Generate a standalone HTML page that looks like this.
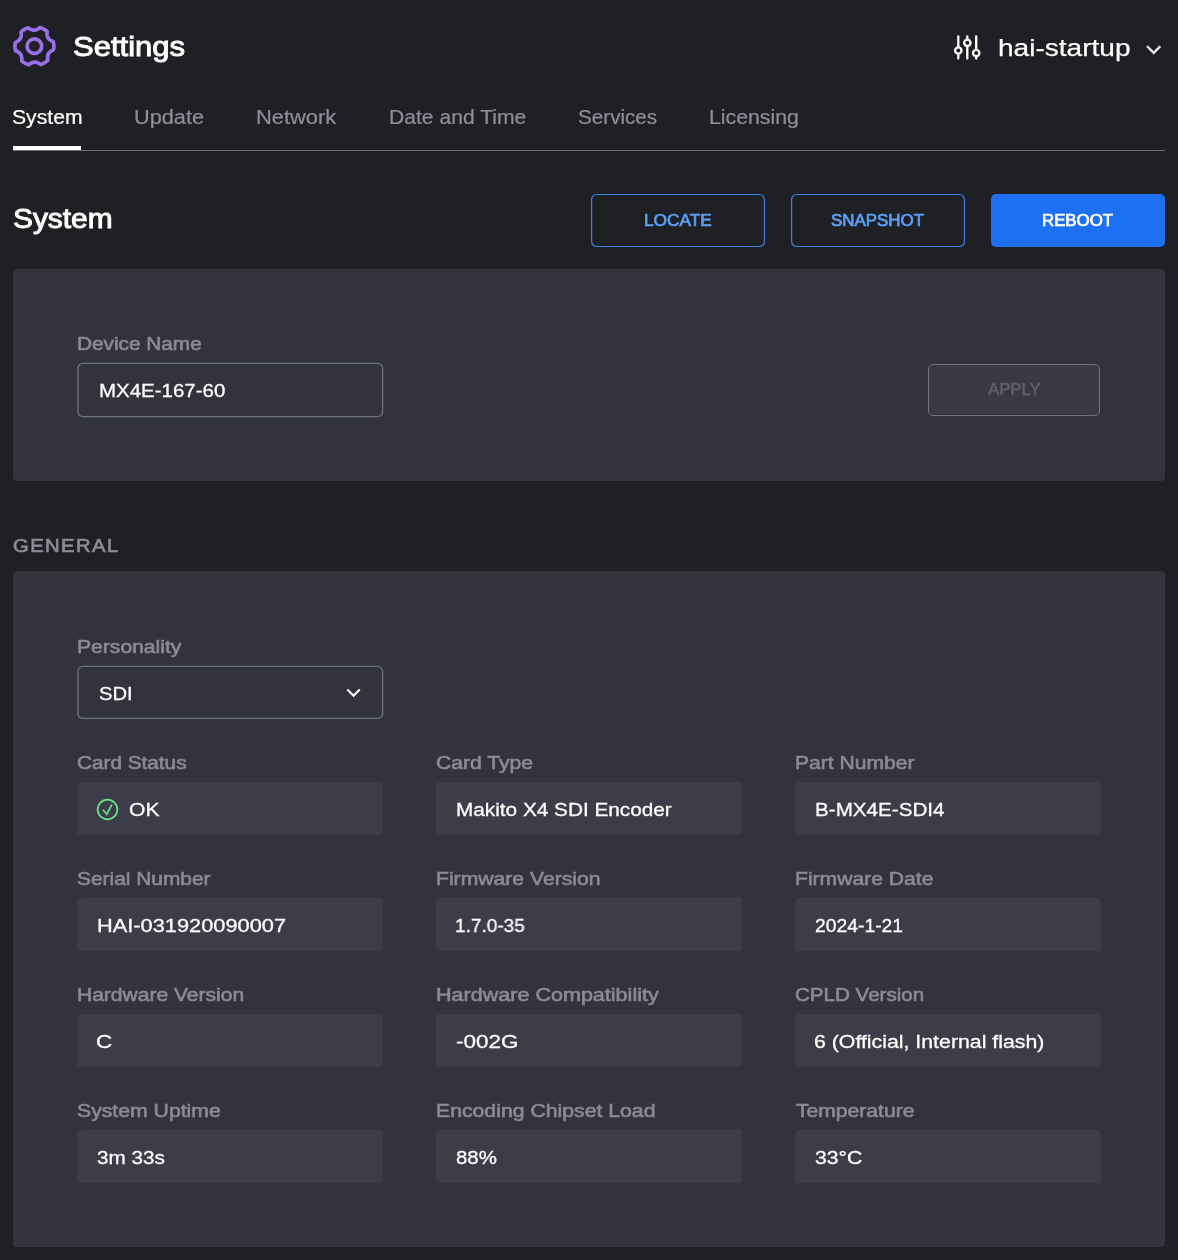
<!DOCTYPE html>
<html lang="en"><head><meta charset="utf-8"><title>Settings</title>
<style>
html,body{margin:0;padding:0;}
body{width:1178px;height:1260px;background:#1f2023;position:relative;overflow:hidden;font-family:"Liberation Sans",sans-serif;}
h1,h2,label{margin:0;font-weight:400;}
.b{position:absolute;box-sizing:border-box;}
.t{position:absolute;white-space:nowrap;transform-origin:0 0;display:block;will-change:transform;}
</style></head><body>
<header>
<svg class="b" style="left:10px;top:22px" width="50" height="50" viewBox="-24.4 -24.15 50 50" fill="none" stroke="#9a70ea" stroke-width="3.7" stroke-linejoin="round">
<path d="M19.45 0.00 L19.44 0.51 L19.42 1.02 L19.39 1.53 L19.34 2.03 L19.28 2.54 L19.21 3.04 L19.12 3.54 L18.49 3.93 L17.81 4.27 L17.24 4.62 L16.73 4.96 L16.28 5.29 L15.86 5.62 L15.47 5.94 L15.13 6.27 L14.81 6.60 L14.53 6.93 L14.28 7.28 L14.06 7.63 L13.87 8.01 L13.71 8.40 L13.57 8.81 L13.46 9.25 L13.36 9.71 L13.29 10.20 L13.24 10.72 L13.20 11.27 L13.18 11.87 L13.19 12.51 L13.24 13.24 L13.39 14.11 L13.01 14.45 L12.63 14.79 L12.24 15.12 L11.84 15.43 L11.43 15.74 L11.02 16.03 L10.59 16.31 L10.16 16.58 L9.73 16.84 L9.28 17.09 L8.83 17.33 L8.37 17.56 L7.91 17.77 L7.44 17.97 L6.97 18.16 L6.49 18.33 L5.84 17.98 L5.20 17.56 L4.62 17.24 L4.07 16.97 L3.56 16.74 L3.07 16.54 L2.59 16.37 L2.14 16.23 L1.69 16.13 L1.26 16.05 L0.84 16.01 L0.42 15.99 L0.00 16.02 L-0.42 16.07 L-0.85 16.16 L-1.28 16.28 L-1.73 16.43 L-2.19 16.61 L-2.66 16.82 L-3.16 17.07 L-3.69 17.35 L-4.24 17.68 L-4.85 18.09 L-5.52 18.65 L-6.01 18.50 L-6.49 18.33 L-6.97 18.16 L-7.44 17.97 L-7.91 17.77 L-8.37 17.56 L-8.83 17.33 L-9.28 17.09 L-9.72 16.84 L-10.16 16.58 L-10.59 16.31 L-11.02 16.03 L-11.43 15.74 L-11.84 15.43 L-12.24 15.12 L-12.63 14.79 L-12.65 14.05 L-12.61 13.28 L-12.62 12.62 L-12.66 12.01 L-12.72 11.45 L-12.79 10.92 L-12.88 10.43 L-12.99 9.97 L-13.12 9.53 L-13.27 9.12 L-13.44 8.73 L-13.64 8.36 L-13.87 8.01 L-14.13 7.67 L-14.42 7.35 L-14.74 7.03 L-15.09 6.72 L-15.48 6.41 L-15.90 6.10 L-16.36 5.79 L-16.87 5.48 L-17.43 5.16 L-18.09 4.85 L-18.91 4.54 L-19.02 4.04 L-19.12 3.54 L-19.21 3.04 L-19.28 2.54 L-19.34 2.03 L-19.39 1.53 L-19.42 1.02 L-19.44 0.51 L-19.45 0.00 L-19.44 -0.51 L-19.42 -1.02 L-19.39 -1.53 L-19.34 -2.03 L-19.28 -2.54 L-19.21 -3.04 L-19.12 -3.54 L-18.49 -3.93 L-17.81 -4.27 L-17.24 -4.62 L-16.73 -4.96 L-16.28 -5.29 L-15.86 -5.62 L-15.47 -5.94 L-15.13 -6.27 L-14.81 -6.60 L-14.53 -6.93 L-14.28 -7.28 L-14.06 -7.63 L-13.87 -8.01 L-13.71 -8.40 L-13.57 -8.81 L-13.46 -9.25 L-13.36 -9.71 L-13.29 -10.20 L-13.24 -10.72 L-13.20 -11.27 L-13.18 -11.87 L-13.19 -12.51 L-13.24 -13.24 L-13.39 -14.11 L-13.01 -14.45 L-12.63 -14.79 L-12.24 -15.12 L-11.84 -15.43 L-11.43 -15.74 L-11.02 -16.03 L-10.59 -16.31 L-10.16 -16.58 L-9.73 -16.84 L-9.28 -17.09 L-8.83 -17.33 L-8.37 -17.56 L-7.91 -17.77 L-7.44 -17.97 L-6.97 -18.16 L-6.49 -18.33 L-5.84 -17.98 L-5.20 -17.56 L-4.62 -17.24 L-4.07 -16.97 L-3.56 -16.74 L-3.07 -16.54 L-2.59 -16.37 L-2.14 -16.23 L-1.69 -16.13 L-1.26 -16.05 L-0.84 -16.01 L-0.42 -15.99 L-0.00 -16.02 L0.42 -16.07 L0.85 -16.16 L1.28 -16.28 L1.73 -16.43 L2.19 -16.61 L2.66 -16.82 L3.16 -17.07 L3.69 -17.35 L4.24 -17.68 L4.85 -18.09 L5.52 -18.65 L6.01 -18.50 L6.49 -18.33 L6.97 -18.16 L7.44 -17.97 L7.91 -17.77 L8.37 -17.56 L8.83 -17.33 L9.28 -17.09 L9.73 -16.84 L10.16 -16.58 L10.59 -16.31 L11.02 -16.03 L11.43 -15.74 L11.84 -15.43 L12.24 -15.12 L12.63 -14.79 L12.65 -14.05 L12.61 -13.28 L12.62 -12.62 L12.66 -12.01 L12.72 -11.45 L12.79 -10.92 L12.88 -10.43 L12.99 -9.97 L13.12 -9.53 L13.27 -9.12 L13.44 -8.73 L13.64 -8.36 L13.87 -8.01 L14.13 -7.67 L14.42 -7.35 L14.74 -7.03 L15.09 -6.72 L15.48 -6.41 L15.90 -6.10 L16.36 -5.79 L16.87 -5.48 L17.43 -5.16 L18.09 -4.85 L18.91 -4.54 L19.02 -4.04 L19.12 -3.54 L19.21 -3.04 L19.28 -2.54 L19.34 -2.03 L19.39 -1.53 L19.42 -1.02 L19.44 -0.51Z"/>
<circle cx="0" cy="0" r="7.25"/>
</svg>
<h1 class="t" id="title" style="left:73.00px;top:32.25px;font-size:28.30px;line-height:28.30px;color:#ffffff;transform:scaleX(1.0968);-webkit-text-stroke:0.95px #ffffff;">Settings</h1>
<svg class="b" style="left:950px;top:30px" width="36" height="36" viewBox="950 30 36 36" fill="none" stroke="#fff" stroke-width="2.3" stroke-linecap="round">
<path d="M958.3 36.3V46.6M958.3 54.4V58.5M967.3 36.3V38.8M967.3 46.8V58.5M976.2 36.3V49M976.2 57V58.5"/>
<circle cx="958.3" cy="50.5" r="3.2"/><circle cx="967.3" cy="42.8" r="3.2"/><circle cx="976.2" cy="53" r="3.2"/>
</svg>
<span class="t" id="user" style="left:998.28px;top:36.26px;font-size:24.50px;line-height:24.50px;color:#ffffff;transform:scaleX(1.1446);-webkit-text-stroke:0.25px #ffffff;">hai-startup</span>
<svg class="b" style="left:1140px;top:38px" width="26" height="20" viewBox="1140 38 26 20" fill="none" stroke="#fff" stroke-width="2.2">
<path d="M1147.1 46.3L1153.7 52.9L1160.3 46.3"/>
</svg>
</header>
<nav>
<div class="b" style="left:13px;top:150px;width:1152px;height:1px;border-radius:0px;background:#6c6c7c;"></div>
<div class="b" style="left:13px;top:146px;width:68px;height:4px;border-radius:0px;background:#ffffff;"></div>
<span class="t" id="tab0" style="left:12.20px;top:108.25px;font-size:19.40px;line-height:19.40px;color:#ffffff;transform:scaleX(1.0907);-webkit-text-stroke:0.22px #ffffff;">System</span>
<span class="t" id="tab1" style="left:133.92px;top:108.25px;font-size:19.40px;line-height:19.40px;color:#8d8d9b;transform:scaleX(1.1204);-webkit-text-stroke:0.22px #8d8d9b;">Update</span>
<span class="t" id="tab2" style="left:256.10px;top:108.25px;font-size:19.40px;line-height:19.40px;color:#8d8d9b;transform:scaleX(1.1288);-webkit-text-stroke:0.22px #8d8d9b;">Network</span>
<span class="t" id="tab3" style="left:388.58px;top:108.25px;font-size:19.40px;line-height:19.40px;color:#8d8d9b;transform:scaleX(1.0887);-webkit-text-stroke:0.22px #8d8d9b;">Date and Time</span>
<span class="t" id="tab4" style="left:577.71px;top:108.25px;font-size:19.40px;line-height:19.40px;color:#8d8d9b;transform:scaleX(1.0649);-webkit-text-stroke:0.22px #8d8d9b;">Services</span>
<span class="t" id="tab5" style="left:708.57px;top:108.25px;font-size:19.40px;line-height:19.40px;color:#8d8d9b;transform:scaleX(1.0972);-webkit-text-stroke:0.22px #8d8d9b;">Licensing</span>
</nav>
<main>
<section>
<h2 class="t" id="h2" style="left:13.28px;top:205.26px;font-size:27.40px;line-height:27.40px;color:#ffffff;transform:scaleX(1.0907);-webkit-text-stroke:0.95px #ffffff;">System</h2>
<svg class="b" style="left:585px;top:188px" width="390" height="66" viewBox="585 188 390 66" fill="none" stroke="#3d7ee4" stroke-width="1.2">
<rect x="591.6" y="194.5" width="172.8" height="52" rx="5"/>
<rect x="791.6" y="194.5" width="172.8" height="52" rx="5"/>
</svg>
<div class="b" style="left:991px;top:194px;width:174px;height:53px;border-radius:5px;background:#1e70f3;"></div>
<span class="t" id="b1" style="left:644.33px;top:213.25px;font-size:15.80px;line-height:15.80px;color:#5a9ff8;transform:scaleX(1.0932);-webkit-text-stroke:0.70px #5a9ff8;">LOCATE</span>
<span class="t" id="b2" style="left:831.21px;top:213.25px;font-size:15.80px;line-height:15.80px;color:#5a9ff8;transform:scaleX(1.0713);-webkit-text-stroke:0.70px #5a9ff8;">SNAPSHOT</span>
<span class="t" id="b3" style="left:1041.65px;top:213.25px;font-size:15.80px;line-height:15.80px;color:#ffffff;transform:scaleX(1.0649);-webkit-text-stroke:0.70px #ffffff;">REBOOT</span>
<div class="b" style="left:13px;top:269px;width:1152px;height:212px;border-radius:4px;background:#33333e;"></div>
<label class="t" id="l_dev" style="left:77.00px;top:334.26px;font-size:19.00px;line-height:19.00px;color:#8b8b97;transform:scaleX(1.0939);-webkit-text-stroke:0.60px #8b8b97;">Device Name</label>
<svg class="b" style="left:70px;top:355px" width="320" height="70" viewBox="70 355 320 70" fill="none" stroke="#6e7084" stroke-width="1.3">
<rect x="77.95" y="363.35" width="304.65" height="53.2" rx="5"/>
</svg>
<span class="t" id="v_dev" style="left:98.89px;top:381.26px;font-size:19.20px;line-height:19.20px;color:#ffffff;transform:scaleX(1.0668);-webkit-text-stroke:0.30px #ffffff;">MX4E-167-60</span>
<div class="b" style="left:928px;top:364px;width:172px;height:52px;border-radius:5px;background:#393943;border:1px solid #73737f;"></div>
<span class="t" id="apply" style="left:987.90px;top:382.25px;font-size:16.00px;line-height:16.00px;color:#5f5f6e;transform:scaleX(1.0454);-webkit-text-stroke:0.50px #5f5f6e;">APPLY</span>
</section>
<section>
<h2 class="t" id="general" style="left:12.69px;top:536.26px;font-size:19.20px;line-height:19.20px;color:#8b8b97;transform:scaleX(1.0568);-webkit-text-stroke:0.70px #8b8b97;letter-spacing:1.30px;">GENERAL</h2>
<div class="b" style="left:13px;top:571px;width:1152px;height:676px;border-radius:4px;background:#33333e;"></div>
<label class="t" id="l_pers" style="left:76.52px;top:637.26px;font-size:19.00px;line-height:19.00px;color:#8b8b97;transform:scaleX(1.1106);-webkit-text-stroke:0.60px #8b8b97;">Personality</label>
<svg class="b" style="left:70px;top:660px" width="320" height="66" viewBox="70 660 320 66" fill="none" stroke="#6e7084" stroke-width="1.3">
<rect x="77.95" y="666.4" width="304.65" height="52.05" rx="5"/>
<path d="M347.3 689.45L353.55 695.7L359.8 689.45" stroke="#fff" stroke-width="2.1"/>
</svg>
<span class="t" id="v_pers" style="left:98.77px;top:684.26px;font-size:19.20px;line-height:19.20px;color:#ffffff;transform:scaleX(1.0534);-webkit-text-stroke:0.30px #ffffff;">SDI</span>
<label class="t" id="l00" style="left:76.64px;top:753.26px;font-size:19.00px;line-height:19.00px;color:#8b8b97;transform:scaleX(1.0915);-webkit-text-stroke:0.60px #8b8b97;">Card Status</label>
<div class="b" style="left:77px;top:782px;width:306px;height:53px;border-radius:4px;background:#3d3d4a;"></div>
<svg class="b" style="left:94px;top:796px" width="28" height="28" viewBox="94 796 28 28" fill="none" stroke="#66e487" stroke-width="1.7">
<circle cx="107.5" cy="809.5" r="9.85"/>
<path d="M102.9 809.8L106.85 814.2L111.85 804.6"/>
</svg>
<span class="t" id="v00" style="left:129.09px;top:800.26px;font-size:19.20px;line-height:19.20px;color:#ffffff;transform:scaleX(1.0989);-webkit-text-stroke:0.30px #ffffff;">OK</span>
<label class="t" id="l01" style="left:436.37px;top:753.26px;font-size:19.00px;line-height:19.00px;color:#8b8b97;transform:scaleX(1.1099);-webkit-text-stroke:0.60px #8b8b97;">Card Type</label>
<div class="b" style="left:436px;top:782px;width:306px;height:53px;border-radius:4px;background:#3d3d4a;"></div>
<span class="t" id="v01" style="left:455.93px;top:800.26px;font-size:19.20px;line-height:19.20px;color:#ffffff;transform:scaleX(1.0817);-webkit-text-stroke:0.30px #ffffff;">Makito X4 SDI Encoder</span>
<label class="t" id="l02" style="left:795.37px;top:753.26px;font-size:19.00px;line-height:19.00px;color:#8b8b97;transform:scaleX(1.1086);-webkit-text-stroke:0.60px #8b8b97;">Part Number</label>
<div class="b" style="left:795px;top:782px;width:306px;height:53px;border-radius:4px;background:#3d3d4a;"></div>
<span class="t" id="v02" style="left:814.68px;top:800.26px;font-size:19.20px;line-height:19.20px;color:#ffffff;transform:scaleX(1.0752);-webkit-text-stroke:0.30px #ffffff;">B-MX4E-SDI4</span>
<label class="t" id="l10" style="left:77.11px;top:869.26px;font-size:19.00px;line-height:19.00px;color:#8b8b97;transform:scaleX(1.0995);-webkit-text-stroke:0.60px #8b8b97;">Serial Number</label>
<div class="b" style="left:77px;top:898px;width:306px;height:53px;border-radius:4px;background:#3d3d4a;"></div>
<span class="t" id="v10" style="left:96.71px;top:916.26px;font-size:19.20px;line-height:19.20px;color:#ffffff;transform:scaleX(1.1356);-webkit-text-stroke:0.30px #ffffff;">HAI-031920090007</span>
<label class="t" id="l11" style="left:436.21px;top:869.26px;font-size:19.00px;line-height:19.00px;color:#8b8b97;transform:scaleX(1.1133);-webkit-text-stroke:0.60px #8b8b97;">Firmware Version</label>
<div class="b" style="left:436px;top:898px;width:306px;height:53px;border-radius:4px;background:#3d3d4a;"></div>
<span class="t" id="v11" style="left:455.36px;top:916.26px;font-size:19.20px;line-height:19.20px;color:#ffffff;transform:scaleX(0.9912);-webkit-text-stroke:0.30px #ffffff;">1.7.0-35</span>
<label class="t" id="l12" style="left:794.86px;top:869.26px;font-size:19.00px;line-height:19.00px;color:#8b8b97;transform:scaleX(1.1107);-webkit-text-stroke:0.60px #8b8b97;">Firmware Date</label>
<div class="b" style="left:795px;top:898px;width:306px;height:53px;border-radius:4px;background:#3d3d4a;"></div>
<span class="t" id="v12" style="left:814.71px;top:916.26px;font-size:19.20px;line-height:19.20px;color:#ffffff;transform:scaleX(1.0071);-webkit-text-stroke:0.30px #ffffff;">2024-1-21</span>
<label class="t" id="l20" style="left:77.43px;top:985.26px;font-size:19.00px;line-height:19.00px;color:#8b8b97;transform:scaleX(1.1063);-webkit-text-stroke:0.60px #8b8b97;">Hardware Version</label>
<div class="b" style="left:77px;top:1014px;width:306px;height:53px;border-radius:4px;background:#3d3d4a;"></div>
<span class="t" id="v20" style="left:96.16px;top:1032.26px;font-size:19.20px;line-height:19.20px;color:#ffffff;transform:scaleX(1.1682);-webkit-text-stroke:0.30px #ffffff;">C</span>
<label class="t" id="l21" style="left:436.05px;top:985.26px;font-size:19.00px;line-height:19.00px;color:#8b8b97;transform:scaleX(1.1340);-webkit-text-stroke:0.60px #8b8b97;">Hardware Compatibility</label>
<div class="b" style="left:436px;top:1014px;width:306px;height:53px;border-radius:4px;background:#3d3d4a;"></div>
<span class="t" id="v21" style="left:455.86px;top:1032.26px;font-size:19.20px;line-height:19.20px;color:#ffffff;transform:scaleX(1.1708);-webkit-text-stroke:0.30px #ffffff;">-002G</span>
<label class="t" id="l22" style="left:794.69px;top:985.26px;font-size:19.00px;line-height:19.00px;color:#8b8b97;transform:scaleX(1.0826);-webkit-text-stroke:0.60px #8b8b97;">CPLD Version</label>
<div class="b" style="left:795px;top:1014px;width:306px;height:53px;border-radius:4px;background:#3d3d4a;"></div>
<span class="t" id="v22" style="left:814.14px;top:1032.26px;font-size:19.20px;line-height:19.20px;color:#ffffff;transform:scaleX(1.1097);-webkit-text-stroke:0.30px #ffffff;">6 (Official, Internal flash)</span>
<label class="t" id="l30" style="left:76.76px;top:1101.26px;font-size:19.00px;line-height:19.00px;color:#8b8b97;transform:scaleX(1.1160);-webkit-text-stroke:0.60px #8b8b97;">System Uptime</label>
<div class="b" style="left:77px;top:1130px;width:306px;height:53px;border-radius:4px;background:#3d3d4a;"></div>
<span class="t" id="v30" style="left:96.74px;top:1148.26px;font-size:19.20px;line-height:19.20px;color:#ffffff;transform:scaleX(1.0801);-webkit-text-stroke:0.30px #ffffff;">3m 33s</span>
<label class="t" id="l31" style="left:436.34px;top:1101.26px;font-size:19.00px;line-height:19.00px;color:#8b8b97;transform:scaleX(1.1169);-webkit-text-stroke:0.60px #8b8b97;">Encoding Chipset Load</label>
<div class="b" style="left:436px;top:1130px;width:306px;height:53px;border-radius:4px;background:#3d3d4a;"></div>
<span class="t" id="v31" style="left:455.73px;top:1148.26px;font-size:19.20px;line-height:19.20px;color:#ffffff;transform:scaleX(1.0653);-webkit-text-stroke:0.30px #ffffff;">88%</span>
<label class="t" id="l32" style="left:796.12px;top:1101.26px;font-size:19.00px;line-height:19.00px;color:#8b8b97;transform:scaleX(1.1101);-webkit-text-stroke:0.60px #8b8b97;">Temperature</label>
<div class="b" style="left:795px;top:1130px;width:306px;height:53px;border-radius:4px;background:#3d3d4a;"></div>
<span class="t" id="v32" style="left:814.67px;top:1148.26px;font-size:19.20px;line-height:19.20px;color:#ffffff;transform:scaleX(1.1042);-webkit-text-stroke:0.30px #ffffff;">33°C</span>
</section>
</main>
</body></html>
